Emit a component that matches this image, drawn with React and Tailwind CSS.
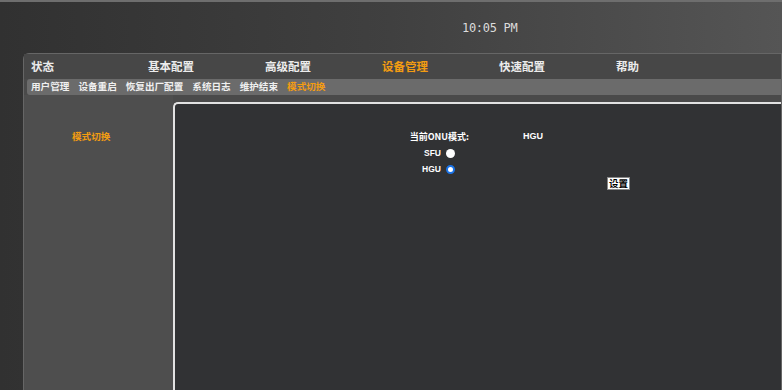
import React, { useState } from "react";

const topMenu = ["状态", "基本配置", "高级配置", "设备管理", "快速配置", "帮助"];
const subMenu = ["用户管理", "设备重启", "恢复出厂配置", "系统日志", "维护结束", "模式切换"];

export default function App() {
  const [mode, setMode] = useState("HGU");

  return (
    <div className="h-screen w-full overflow-hidden flex flex-col bg-linear-to-r from-[#313131] via-[#404040] to-[#555555] font-['Noto_Sans_CJK_SC','Noto_Sans',sans-serif]">
      {/* top stripe */}
      <div className="h-[2px] bg-[#6e6e6e]" />

      {/* clock */}
      <div className="h-[51px] pl-[462px] pt-[11px]">
        <span className="font-['DejaVu_Sans_Mono',monospace] text-[12px] text-[#dcdcdc] tracking-[-0.3px]">
          10:05 PM
        </span>
      </div>

      {/* panel */}
      <div className="ml-[23px] flex-1 flex flex-col rounded-tl-[6px] border-l border-t border-r border-[#666666] bg-[#4a4a4a]">
        {/* main nav */}
        <nav className="h-[25px] flex items-center pl-[7px] bg-[#474747]">
          {topMenu.map((item) => (
            <span
              key={item}
              className={`w-[117px] text-[11.5px] font-bold leading-none ${
                item === "设备管理" ? "text-[#f39c12]" : "text-[#ececec]"
              }`}
            >
              {item}
            </span>
          ))}
        </nav>

        {/* sub nav */}
        <div className="ml-[3px] h-[16px] flex items-center gap-[9px] pl-[4px] rounded-l-[3px] bg-[#6b6b6b]">
          {subMenu.map((item) => (
            <span
              key={item}
              className={`text-[9.6px] font-bold leading-none ${
                item === "模式切换" ? "text-[#f39c12]" : "text-[#f0f0f0]"
              }`}
            >
              {item}
            </span>
          ))}
        </div>

        {/* body */}
        <div className="flex-1 flex pt-[7px]">
          <aside className="w-[149px] -mt-[7px] pt-[26px] pl-[48px] bg-[#4e4e4e]">
            <span className="text-[9.6px] font-bold text-[#f39c12]">模式切换</span>
          </aside>

          <main className="flex-1 rounded-tl-[5px] border-l-2 border-t-2 border-[#e2e2e2] bg-[#313234] pt-[26px] text-[9px] font-bold text-white">
            <div className="flex items-center h-[13px]">
              <span className="w-[294px] pl-[5px] text-right">当前ONU模式:</span>
              <span className="ml-[54px] font-['Liberation_Sans',sans-serif]">HGU</span>
            </div>

            <div className="flex items-center h-[13px] mt-[4px]">
              <span className="w-[266px] text-right font-['Liberation_Sans',sans-serif] text-[8.5px]">SFU</span>
              <button
                onClick={() => setMode("SFU")}
                className={`ml-[5px] w-[9px] h-[9px] rounded-full bg-white ${
                  mode === "SFU" ? "border-[2.5px] border-[#1a73e8]" : ""
                }`}
              />
            </div>

            <div className="flex items-center h-[13px] mt-[3px]">
              <span className="w-[266px] text-right font-['Liberation_Sans',sans-serif] text-[8.5px]">HGU</span>
              <button
                onClick={() => setMode("HGU")}
                className={`ml-[5px] w-[9px] h-[9px] rounded-full bg-white ${
                  mode === "HGU" ? "border-[2.5px] border-[#1a73e8]" : ""
                }`}
              />
            </div>

            <div className="pl-[432px] mt-[1px]">
              <button className="h-[13px] px-[1px] bg-white border border-[#888] text-black text-[9.5px] font-bold leading-none">
                设置
              </button>
            </div>
          </main>
        </div>
      </div>
    </div>
  );
}
